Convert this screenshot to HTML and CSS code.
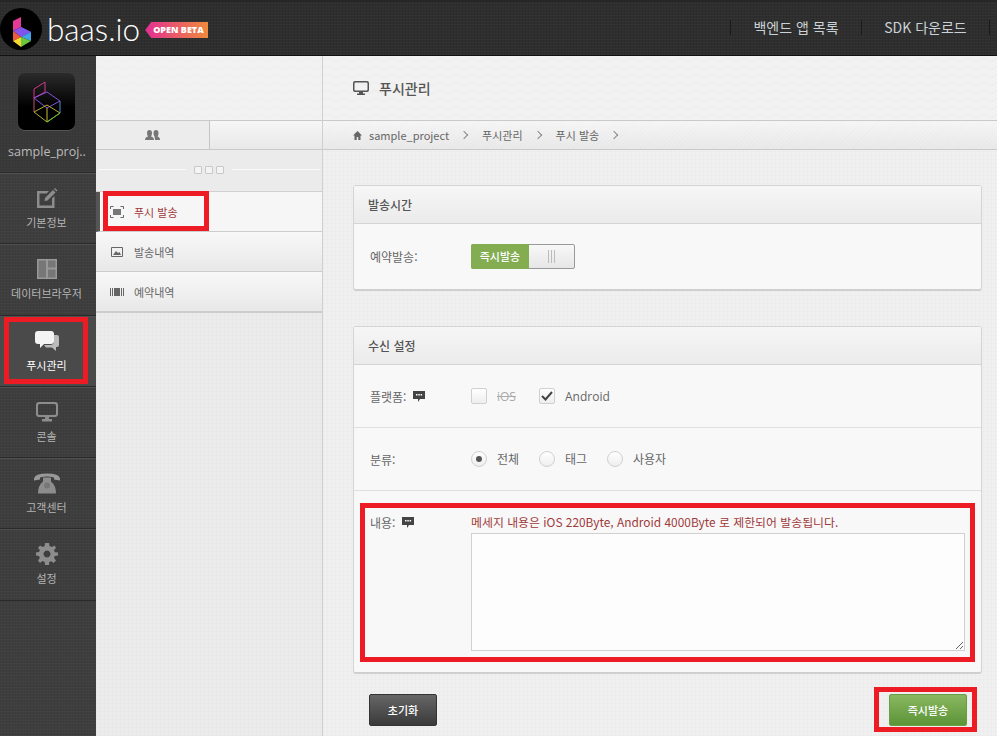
FILE: index.html
```html
<!DOCTYPE html>
<html lang="ko">

<head>
    <meta charset="UTF-8">
    <meta name="viewport" content="width=device-width, initial-scale=1.0">
    <link rel="stylesheet" href="styles.css">
    <title>baas.io</title>
</head>

<body>
    <header class="topbar">
        <div class="brand">
            <svg class="brandLogo" width="42" height="42" viewBox="0 0 42 42">
                <circle cx="21" cy="21" r="21" fill="#000" />
                <polygon points="13,13 21,9 21,19 13,23" fill="#e23a96" />
                <polygon points="13,23 21,19 31,24 21,29" fill="#8a52e8" />
                <polygon points="13,23 21,29 13,33" fill="#ef5a3c" />
                <polygon points="21,19 31,24 21,29" fill="#7a55ee" />
                <polygon points="31,24 31,33 21,29" fill="#3fa6e6" />
                <polygon points="13,33 21,29 21,39" fill="#f3d92e" />
                <polygon points="31,33 21,29 21,39" fill="#6cc63f" />
            </svg>
            <span class="brandName">baas.io</span>
            <span class="betaBadge">OPEN BETA</span>
        </div>
        <nav class="topLinks">
            <a>백엔드 앱 목록</a>
            <a>SDK 다운로드</a>
        </nav>
    </header>

    <div class="layout">
        <aside class="sideNav">
            <div class="project">
                <div class="projectIcon">
                    <svg width="30" height="42" viewBox="0 0 30 42" fill="none" stroke-width="1">
                        <path d="M2 8 13 1V11L2 17Z" stroke="#d0388e" />
                        <path d="M2 17 15 11 28 20 15 27Z" stroke="#8550e0" />
                        <path d="M2 17V31" stroke="#c0506a" />
                        <path d="M28 20V32" stroke="#4a90d0" />
                        <path d="M2 31 15 24 28 32 15 41Z" stroke="#b8b030" />
                        <path d="M15 27V41" stroke="#c8c030" />
                        <path d="M28 32 15 41" stroke="#60c040" />
                    </svg>
                </div>
                <div class="projectName">sample_proj..</div>
            </div>
            <a class="navItem">
                <svg width="22" height="22" viewBox="0 0 22 22">
                    <path d="M1 4H13L10.500 6.500H3.500V18.500H16V11.500L18.500 9V21H1Z" fill="#8d8d8d" />
                    <path d="M9 11 17 3 19.500 5.500 11.500 13.500 8.500 14Z" fill="#8d8d8d" />
                    <path d="M18 2 19 1 21.500 3.500 20.500 4.500Z" fill="#8d8d8d" />
                </svg>
                <span>기본정보</span>
            </a>
            <a class="navItem">
                <svg width="20" height="20" viewBox="0 0 20 20">
                    <path d="M0 0H20V20H0Z" fill="#999" />
                    <path d="M1.500 1.500H9V18.500H1.500ZM11 1.500H18.500V8.500H11ZM11 10.500H18.500V18.500H11Z" fill="#777" />
                </svg>
                <span>데이터브라우저</span>
            </a>
            <a class="navItem navItemActive">
                <svg width="24" height="20" viewBox="0 0 24 20">
                    <path d="M19 4H22Q24 4 24 6V14Q24 16 22 16H21V20L17 16.500H11L9 14H15Q19 14 19 10Z" fill="#bbb" />
                    <path d="M3 0H16Q19 0 19 3V10Q19 13 16 13H9L5 17V13H3Q0 13 0 10V3Q0 0 3 0Z" fill="#f4f4f4" />
                </svg>
                <span>푸시관리</span>
            </a>
            <a class="navItem">
                <svg width="22" height="20" viewBox="0 0 22 20">
                    <path d="M3 0H19Q22 0 22 3V12Q22 15 19 15H3Q0 15 0 12V3Q0 0 3 0ZM3.500 2Q2 2 2 3.500V11.500Q2 13 3.500 13H18.500Q20 13 20 11.500V3.500Q20 2 18.500 2Z" fill="#8d8d8d" />
                    <path d="M9 15H13V17H16V19.500H6V17H9Z" fill="#8d8d8d" />
                </svg>
                <span>콘솔</span>
            </a>
            <a class="navItem">
                <svg width="26" height="21" viewBox="0 0 26 21">
                    <path d="M0 6Q1 1 13 1T26 6V8L20 7V5Q13 3 6 5V7L0 8Z" fill="#999" />
                    <path d="M9 5H17V9Q22 13 22 21H4Q4 13 9 9Z" fill="#8d8d8d" />
                    <circle cx="13" cy="13" r="3" fill="#777" />
                </svg>
                <span>고객센터</span>
            </a>
            <a class="navItem">
                <svg width="22" height="22" viewBox="0 0 22 22">
                    <path d="M9 0H13L13.500 3 16 4 18.500 2.500 20 5 18 7 18.800 9.200 22 9.500V12.500L18.800 13 18 15 20 17.500 17.500 20 15.300 18.200 13.200 19 13 22H9L8.700 19 6.500 18 4 20 2 17.500 3.800 15 3 13 0 12.500V9.500L3 9 3.900 7 2 5 4 2.500 6.500 4 8.700 3Z M11 7.500A3.500 3.500 0 1 0 11.010 7.500Z" fill="#8d8d8d" fill-rule="evenodd" />
                </svg>
                <span>설정</span>
            </a>
        </aside>

        <section class="subColumn">
            <div class="subHead"></div>
            <div class="subTabs">
                <div class="subTab">
                    <svg width="15" height="10" viewBox="0 0 15 10">
                        <path d="M0 10Q0 7 3 6.500 2 5 2 3 2 0 4.500 0T7 3Q7 5 6 6.500 9 7 9 10Z" fill="#777" />
                        <path d="M9.500 6.500Q8.500 5 8.500 3 8.500 0 11 0T13.500 3Q13.500 5 12.500 6.500 15 7 15 10H10Q10 8 9.500 6.500Z" fill="#777" />
                    </svg>
                </div>
                <div class="subTab subTabBlank"></div>
            </div>
            <div class="subDivider">
                <span class="dividerLine"></span>
                <i></i><i></i><i></i>
                <span class="dividerLine"></span>
            </div>
            <ul class="subMenu">
                <li class="subMenuActive">
                    <svg width="14" height="12" viewBox="0 0 14 12" fill="none" stroke="#666">
                        <path d="M.5 3V.5H3.500M10.500 .5H13.500V3M13.500 9V11.500H10.500M3.500 11.500H.5V9" />
                        <rect x="3" y="3" width="8" height="6" fill="#777" stroke="none" />
                    </svg>
                    <span>푸시 발송</span>
                </li>
                <li>
                    <svg width="12" height="10" viewBox="0 0 12 10">
                        <path d="M.5 .5H11.500V9.500H.5Z" fill="none" stroke="#666" />
                        <path d="M2 8 5 4 7 6 8.500 5 10 8Z" fill="#666" />
                    </svg>
                    <span>발송내역</span>
                </li>
                <li>
                    <svg width="14" height="8" viewBox="0 0 14 8">
                        <path d="M0 0H1V8H0ZM2 0H3V8H2ZM4 0H10V8H4ZM11 0H12V8H11ZM13 0H14V8H13Z" fill="#666" />
                    </svg>
                    <span>예약내역</span>
                </li>
            </ul>
        </section>

        <main class="content">
            <div class="pageHead">
                <svg width="16" height="14" viewBox="0 0 16 14">
                    <path d="M2 0H14Q16 0 16 2V9Q16 11 14 11H2Q0 11 0 9V2Q0 0 2 0ZM2.500 1.500Q1.500 1.500 1.500 2.500V8.500Q1.500 9.500 2.500 9.500H13.500Q14.500 9.500 14.500 8.500V2.500Q14.500 1.500 13.500 1.500Z" fill="#555" />
                    <path d="M6 11H10V12.500H12V14H4V12.500H6Z" fill="#555" />
                </svg>
                <h1>푸시관리</h1>
            </div>
            <div class="crumbs">
                <svg width="9" height="9" viewBox="0 0 9 9">
                    <path d="M4.500 0 9 4.500H7.500V9H5.300V6H3.700V9H1.500V4.500H0Z" fill="#666" />
                </svg>
                <span>sample_project</span>
                <span class="crumbSep"></span>
                <span>푸시관리</span>
                <span class="crumbSep"></span>
                <span>푸시 발송</span>
                <span class="crumbSep"></span>
            </div>

            <div class="contentBody">
                <div class="panel">
                    <div class="panelHead">발송시간</div>
                    <div class="formRow rowSchedule">
                        <label class="rowLabel">예약발송:</label>
                        <div class="toggle">
                            <span class="toggleOn">즉시발송</span>
                            <span class="toggleGrip"></span>
                        </div>
                    </div>
                </div>

                <div class="panel">
                    <div class="panelHead">수신 설정</div>
                    <div class="formRow rowLine">
                        <label class="rowLabel">플랫폼:
                            <svg class="tipIcon" width="12" height="11" viewBox="0 0 12 11">
                                <path d="M0 0H12V8H7L5 11V8H0Z" fill="#444" />
                                <path d="M3 3H4.500V4.500H3ZM5.300 3H6.800V4.500H5.300ZM7.600 3H9.100V4.500H7.600Z" fill="#fff" />
                            </svg>
                        </label>
                        <div class="choices">
                            <span class="choice choiceOff"><i class="box"></i><s>iOS</s></span>
                            <span class="choice">
                                <i class="box">
                                    <svg width="12" height="10" viewBox="0 0 12 10">
                                        <path d="M1 5 4.500 8.500 11 1" fill="none" stroke="#444" stroke-width="2" />
                                    </svg>
                                </i>Android
                            </span>
                        </div>
                    </div>
                    <div class="formRow rowLine">
                        <label class="rowLabel">분류:</label>
                        <div class="choices">
                            <span class="choice"><i class="radio radioOn"></i>전체</span>
                            <span class="choice"><i class="radio"></i>태그</span>
                            <span class="choice"><i class="radio"></i>사용자</span>
                        </div>
                    </div>
                    <div class="formRow rowMessage">
                        <label class="rowLabel">내용:
                            <svg class="tipIcon" width="12" height="11" viewBox="0 0 12 11">
                                <path d="M0 0H12V8H7L5 11V8H0Z" fill="#444" />
                                <path d="M3 3H4.500V4.500H3ZM5.300 3H6.800V4.500H5.300ZM7.600 3H9.100V4.500H7.600Z" fill="#fff" />
                            </svg>
                        </label>
                        <div class="messageBox">
                            <p class="limitNote">메세지 내용은 iOS 220Byte, Android 4000Byte 로 제한되어 발송됩니다.</p>
                            <textarea class="messageInput"></textarea>
                        </div>
                    </div>
                </div>

                <div class="actions">
                    <button class="btn btnDark">초기화</button>
                    <button class="btn btnGreen">즉시발송</button>
                </div>
            </div>
        </main>
    </div>

    <!-- red annotation boxes drawn on top of the screenshot -->
    <div class="mark markNav"></div>
    <div class="mark markMenu"></div>
    <div class="mark markMessage"></div>
    <div class="mark markSend"></div>
</body>

</html>
```
FILE: styles.css
```css
* {
    box-sizing: border-box;
}

body {
    margin: 0;
    height: 736px;
    overflow: hidden;
    position: relative;
    font-family: "Noto Sans CJK KR", "Noto Sans", sans-serif;
    font-size: 12px;
    color: #666;
    background: #f0f0f0;
}

/* top bar */
.topbar {
    height: 56px;
    display: flex;
    justify-content: space-between;
    align-items: center;
    background-color: #2e2e2e;
    background-image:
        repeating-linear-gradient(0deg, rgba(255, 255, 255, .025) 0 1px, transparent 1px 3px),
        repeating-linear-gradient(90deg, rgba(0, 0, 0, .08) 0 1px, transparent 1px 3px);
    border-top: 2px solid #262626;
    border-bottom: 1px solid #111;
}

.brand {
    display: flex;
    align-items: center;
}

.brandName {
    margin-left: 5px;
    font-family: "Lato", sans-serif;
    font-weight: 300;
    font-size: 31.500px;
    line-height: 42px;
    color: #fff;
}

.betaBadge {
    margin-left: 5px;
    margin-top: 3px;
    width: 63px;
    height: 16px;
    line-height: 16px;
    padding-left: 8px;
    font-family: "Open Sans", sans-serif;
    font-size: 9px;
    font-weight: 800;
    color: #fff;
    white-space: nowrap;
    background: linear-gradient(90deg, #e22e92, #f08a3c);
    clip-path: polygon(0 50%, 6px 0, 100% 0, 100% 100%, 6px 100%);
}

.topLinks {
    display: flex;
    height: 15px;
    align-items: center;
    border-right: 1px solid #1a1a1a;
    margin-right: 7px;
    margin-bottom: 2px;
}

.topLinks a {
    height: 15px;
    line-height: 15px;
    border-left: 1px solid #1a1a1a;
    color: #c9d2d6;
    font-size: 14px;
    text-align: center;
}

.topLinks a:first-child {
    width: 131px;
}

.topLinks a:last-child {
    width: 128px;
}

.layout {
    display: flex;
    height: 680px;
}

/* left nav */
.sideNav {
    width: 96px;
    flex-shrink: 0;
    background-color: #3e3e3e;
    background-image:
        repeating-linear-gradient(0deg, rgba(255, 255, 255, .02) 0 1px, transparent 1px 3px),
        repeating-linear-gradient(90deg, rgba(0, 0, 0, .05) 0 1px, transparent 1px 3px);
}

.project {
    height: 117px;
    padding-top: 17px;
    border-bottom: 1px solid #2a2a2a;
    text-align: center;
    background-color: rgba(0, 0, 0, .08);
}

.projectIcon {
    width: 57px;
    height: 57px;
    margin: 0 0 0 18px;
    display: flex;
    align-items: center;
    justify-content: center;
    border-radius: 7px;
    background: linear-gradient(#2b2b2b, #000 60%);
    box-shadow: 0 1px 0 rgba(255, 255, 255, .15);
}

.projectName {
    margin-top: 13px;
    padding-right: 2px;
    font-family: "Open Sans", sans-serif;
    font-size: 12.500px;
    color: #bbb;
    white-space: nowrap;
}

.navItem {
    height: 71.300px;
    display: flex;
    flex-direction: column;
    align-items: center;
    color: #b5b5b5;
    border-top: 1px solid #505050;
    border-bottom: 1px solid #2a2a2a;
    padding: 13px 3px 0 0;
}

.navItem svg {
    height: 22px;
    flex-shrink: 0;
}

.navItem span {
    margin-top: 5px;
    font-size: 11px;
    line-height: 16px;
    white-space: nowrap;
}

.navItemActive {
    background: #4a4a4a;
}

.navItemActive span {
    color: #fff;
}

/* second column */
.subColumn {
    width: 227px;
    flex-shrink: 0;
    border-right: 1px solid #cfcfcf;
    background-color: #ececec;
    background-image:
        repeating-linear-gradient(0deg, rgba(0, 0, 0, .012) 0 1px, transparent 1px 4px),
        repeating-linear-gradient(90deg, rgba(0, 0, 0, .012) 0 1px, transparent 1px 4px);
}

.subHead,
.pageHead {
    height: 65px;
    background-color: #f2f2f2;
    background-image: url("data:image/svg+xml,%3Csvg xmlns='http://www.w3.org/2000/svg' width='16' height='8'%3E%3Cpath d='M0 4Q4 1 8 4T16 4' fill='none' stroke='%23eeeeee' stroke-width='2'/%3E%3C/svg%3E");
    border-bottom: 1px solid #c9c9c9;
}

.subTabs {
    display: flex;
    height: 29px;
    border-bottom: 1px solid #c9c9c9;
}

.subTab {
    width: 114px;
    display: flex;
    align-items: center;
    justify-content: center;
    background: #ececec;
    border-right: 1px solid #c4c4c4;
}

.subTabBlank {
    flex: 1;
    border-right: 0;
    background: linear-gradient(#f6f6f6, #e8e8e8);
}

.subDivider {
    height: 42px;
    display: flex;
    align-items: center;
    gap: 3px;
    padding: 0 0 2px;
    background: #ebebeb;
    border-bottom: 1px solid #d0d0d0;
}

.dividerLine {
    flex: 1;
    height: 1px;
    margin: 0 5px 0 2px;
    background: #fafafa;
}

.dividerLine:last-child {
    margin: 0 2px 0 5px;
}

.subDivider i {
    width: 8px;
    height: 8px;
    border: 1px solid #c8c8c8;
    border-radius: 1px;
    background: #f4f4f4;
}

.subMenu {
    list-style: none;
    margin: 0;
    padding: 0;
}

.subMenu li {
    height: 40px;
    display: flex;
    align-items: center;
    padding-left: 14px;
    font-size: 11px;
    color: #666;
    background: linear-gradient(#f8f8f8, #e8e8e8);
    border-bottom: 1px solid #cdcdcd;
}

.subMenu li:last-child {
    height: 41px;
    border-bottom-width: 2px;
}

.subMenu li svg {
    width: 14px;
    flex-shrink: 0;
}

.subMenu li span {
    margin-left: 10px;
}

.subMenu .subMenuActive {
    background: #f6f6f6;
    color: #a0393a;
    border-left: 4px solid #555;
    padding-left: 10px;
}

/* main content */
.content {
    flex: 1;
    min-width: 0;
}

.pageHead {
    display: flex;
    align-items: center;
    gap: 10px;
    padding-left: 30px;
}

.pageHead h1 {
    margin: 0;
    font-size: 14px;
    font-weight: 500;
    color: #555;
}

.crumbs {
    height: 29px;
    display: flex;
    align-items: center;
    padding-left: 30px;
    font-size: 11px;
    color: #666;
    background:
        repeating-linear-gradient(135deg, rgba(0, 0, 0, .012) 0 1px, transparent 1px 3px),
        linear-gradient(#f6f6f6, #e9e9e9);
    border-bottom: 1px solid #c9c9c9;
}

.crumbs svg {
    margin-right: 7px;
}

.crumbSep {
    width: 6px;
    height: 6px;
    margin: 0 15px 0 12px;
    border-top: 1px solid #888;
    border-right: 1px solid #888;
    transform: rotate(45deg);
}

.contentBody {
    padding: 35px 15px 0 30px;
    background-color: #f0f0f0;
    background-image:
        repeating-linear-gradient(0deg, rgba(0, 0, 0, .012) 0 1px, transparent 1px 4px),
        repeating-linear-gradient(90deg, rgba(0, 0, 0, .012) 0 1px, transparent 1px 4px);
    height: 586px;
}

.panel {
    margin-bottom: 35px;
    background: #f8f8f8;
    border: 1px solid #d4d4d4;
    border-bottom: 2px solid #cfcfcf;
    border-radius: 3px;
}

.panelHead {
    height: 38px;
    line-height: 37px;
    padding-left: 14px;
    font-size: 12px;
    font-weight: 500;
    color: #555;
    background: linear-gradient(#f6f6f6, #ebebeb);
    border-bottom: 1px solid #d4d4d4;
}

.formRow {
    display: flex;
    padding-left: 16px;
}

.rowLabel {
    width: 101px;
    flex-shrink: 0;
    display: flex;
    align-items: center;
    gap: 7px;
    height: 18px;
}

.rowSchedule {
    height: 65px;
    padding-top: 20px;
}

.rowSchedule .rowLabel {
    margin-top: 3px;
}

.rowLine {
    height: 63px;
    align-items: center;
    border-bottom: 1px solid #e0e0e0;
}

.rowMessage {
    height: 181px;
    padding-top: 22px;
}

.tipIcon {
    flex-shrink: 0;
}

.toggle {
    width: 104px;
    height: 25px;
    display: flex;
    border: 1px solid #999;
    border-radius: 2px;
    background: linear-gradient(#f8f8f8, #e6e6e6);
}

.toggleOn {
    width: 58px;
    margin: -1px 0 -1px -1px;
    line-height: 25px;
    font-size: 11px;
    text-align: center;
    color: #fff;
    font-weight: 500;
    background: #84ad52;
    border-radius: 2px 0 0 2px;
}

.toggleGrip {
    flex: 1;
    margin: 5px 0;
    background: repeating-linear-gradient(90deg, #bbb 0 1px, transparent 1px 3px) 19px 0 / 7px 100% no-repeat;
}

.choices {
    display: flex;
}

.choice {
    width: 68px;
    display: flex;
    align-items: center;
    white-space: nowrap;
}

.choiceOff {
    color: #aaa;
}

.choice s {
    font-family: "Open Sans", sans-serif;
}

.box,
.radio {
    width: 16px;
    height: 16px;
    margin-right: 10px;
    flex-shrink: 0;
    display: flex;
    align-items: center;
    justify-content: center;
    background: linear-gradient(#fff, #eee);
    border: 1px solid #d0d0d0;
}

.box {
    border-radius: 2px;
}

.radio {
    border-radius: 50%;
}

.radioOn::after {
    content: "";
    width: 6px;
    height: 6px;
    border-radius: 50%;
    background: #555;
}

.choice:not(.choiceOff) {
    font-family: "Open Sans", "Noto Sans CJK KR", sans-serif;
}

.messageBox {
    flex: 1;
    padding-right: 16px;
    min-width: 0;
}

.limitNote {
    margin: 0 0 2px;
    height: 18px;
    line-height: 18px;
    font-size: 11.900px;
    color: #a0393a;
    white-space: nowrap;
}

.messageInput {
    display: block;
    width: 100%;
    height: 118px;
    background: #fdfdfd;
    border: 1px solid #d0d0d0;
    resize: both;
}

.actions {
    display: flex;
    justify-content: space-between;
    margin-top: -15px;
    padding: 0 15px 0 16px;
}

.btn {
    height: 32px;
    font-family: inherit;
    font-size: 11px;
    font-weight: 500;
    color: #fff;
    border-radius: 2px;
}

.btnDark {
    width: 68px;
    background: linear-gradient(#666, #3a3a3a);
    border: 1px solid #333;
}

.btnGreen {
    width: 78px;
    background: linear-gradient(#8ab860, #5c9438);
    border: 1px solid #6a9e44;
}

/* annotation boxes */
.mark {
    position: absolute;
    border: 5px solid #ed1c24;
}

.markNav {
    left: 4px;
    top: 317px;
    width: 84px;
    height: 67px;
}

.markMenu {
    left: 103px;
    top: 191px;
    width: 106px;
    height: 40px;
}

.markMessage {
    left: 360px;
    top: 503px;
    width: 615px;
    height: 159px;
}

.markSend {
    left: 874px;
    top: 687px;
    width: 103px;
    height: 45px;
}
```
